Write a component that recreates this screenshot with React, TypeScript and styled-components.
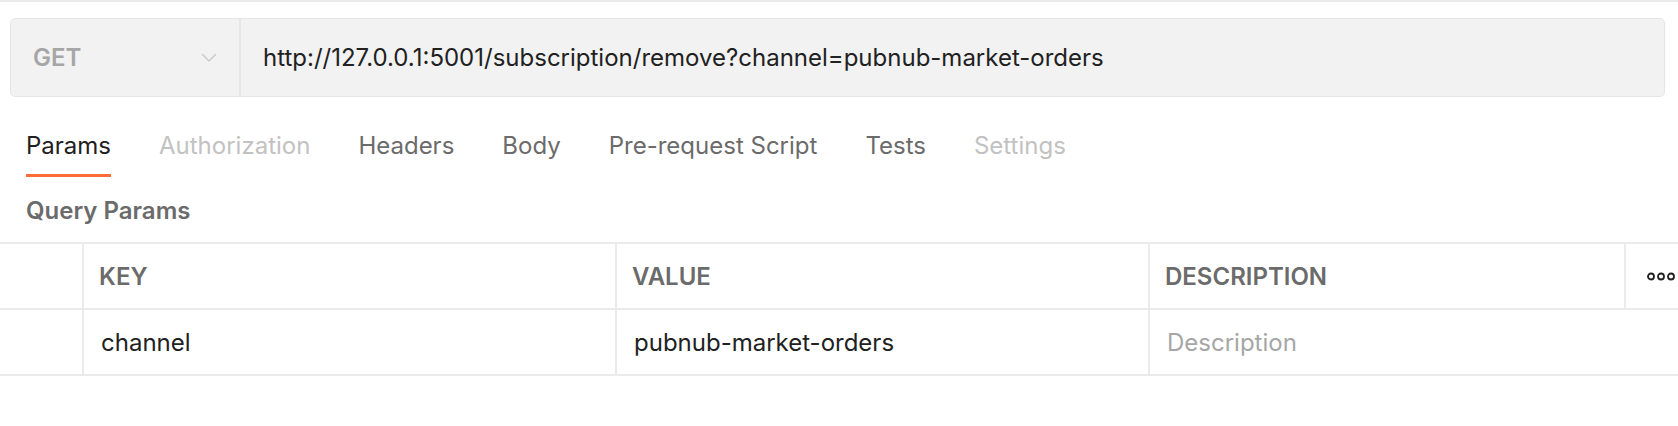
import React from "react";
import styled, { createGlobalStyle } from "styled-components";

const Global = createGlobalStyle`
  html, body { margin: 0; padding: 0; background: #ffffff; }
  body { font-family: Inter, "Noto Sans", "Liberation Sans", sans-serif; -webkit-font-smoothing: antialiased; }
`;

const Page = styled.div`
  width: 1678px;
  height: 426px;
  overflow: hidden;
  background: #ffffff;
`;

const TopRule = styled.div`
  height: 2px;
  background: #ebebeb;
`;

const UrlBar = styled.div`
  display: flex;
  align-items: stretch;
  margin: 16px 13px 0 10px;
  height: 79px;
  box-sizing: border-box;
  background: #f2f2f2;
  border: 1px solid #e6e6e6;
  border-radius: 5px;
`;

const Method = styled.div`
  width: 230px;
  flex: none;
  display: flex;
  align-items: center;
  justify-content: space-between;
  padding: 0 22px 0 22px;
  box-sizing: border-box;
  border-right: 2px solid #e6e6e6;
`;

const MethodLabel = styled.span`
  font-size: 24px;
  font-weight: 600;
  color: #a6a6a6;
`;

const UrlText = styled.div`
  flex: 1;
  display: flex;
  align-items: center;
  padding-left: 22px;
  font-size: 24px;
  color: #212121;
`;

const Tabs = styled.div`
  display: flex;
  gap: 48px;
  padding-left: 26px;
  margin-top: 34px;
`;

const Tab = styled.div<{ $state: "active" | "normal" | "muted" }>`
  font-size: 24px;
  line-height: 30px;
  padding-bottom: 13px;
  border-bottom: 3px solid ${(p) => (p.$state === "active" ? "#ff6c37" : "transparent")};
  color: ${(p) =>
    p.$state === "active" ? "#212121" : p.$state === "muted" ? "#c2c2c2" : "#6b6b6b"};
`;

const SectionTitle = styled.div`
  margin-top: 19px;
  padding-left: 26px;
  font-size: 24px;
  line-height: 30px;
  font-weight: 600;
  color: #6b6b6b;
`;

const Table = styled.div`
  margin-top: 16px;
  border-top: 2px solid #ebebeb;
`;

const Row = styled.div`
  display: grid;
  grid-template-columns: 82px 533px 533px 476px 1fr;
  height: 66px;
  box-sizing: border-box;
  border-bottom: 2px solid #ebebeb;
`;

const Cell = styled.div<{ $head?: boolean; $first?: boolean; $span?: number; $placeholder?: boolean }>`
  display: flex;
  align-items: center;
  box-sizing: border-box;
  border-left: ${(p) => (p.$first ? "none" : "2px solid #ebebeb")};
  padding-left: ${(p) => (p.$head ? "15px" : "17px")};
  font-size: 24px;
  font-weight: ${(p) => (p.$head ? 600 : 400)};
  color: ${(p) => (p.$head ? "#6b6b6b" : p.$placeholder ? "#a6a6a6" : "#212121")};
  ${(p) => (p.$span ? `grid-column: span ${p.$span};` : "")}
`;

const MenuCell = styled(Cell)`
  padding-left: 21px;
`;

const Chevron = () => (
  <svg width="16" height="10" viewBox="0 0 16 10" fill="none">
    <path d="M1.5 1.5 L8 8 L14.5 1.5" stroke="#cccccc" strokeWidth="1.6" strokeLinecap="round" strokeLinejoin="round" />
  </svg>
);

const Dots = () => (
  <svg width="28" height="9" viewBox="0 0 28 9" fill="none">
    <circle cx="4" cy="4.5" r="3" stroke="#212121" strokeWidth="1.8" />
    <circle cx="14" cy="4.5" r="3" stroke="#212121" strokeWidth="1.8" />
    <circle cx="24" cy="4.5" r="3" stroke="#212121" strokeWidth="1.8" />
  </svg>
);

const tabs: { label: string; state: "active" | "normal" | "muted" }[] = [
  { label: "Params", state: "active" },
  { label: "Authorization", state: "muted" },
  { label: "Headers", state: "normal" },
  { label: "Body", state: "normal" },
  { label: "Pre-request Script", state: "normal" },
  { label: "Tests", state: "normal" },
  { label: "Settings", state: "muted" },
];

export default function App() {
  return (
    <Page>
      <Global />
      <TopRule />
      <UrlBar>
        <Method>
          <MethodLabel>GET</MethodLabel>
          <Chevron />
        </Method>
        <UrlText>http://127.0.0.1:5001/subscription/remove?channel=pubnub-market-orders</UrlText>
      </UrlBar>
      <Tabs>
        {tabs.map((t) => (
          <Tab key={t.label} $state={t.state}>
            {t.label}
          </Tab>
        ))}
      </Tabs>
      <SectionTitle>Query Params</SectionTitle>
      <Table>
        <Row>
          <Cell $first />
          <Cell $head>KEY</Cell>
          <Cell $head>VALUE</Cell>
          <Cell $head>DESCRIPTION</Cell>
          <MenuCell>
            <Dots />
          </MenuCell>
        </Row>
        <Row>
          <Cell $first />
          <Cell>channel</Cell>
          <Cell>pubnub-market-orders</Cell>
          <Cell $span={2} $placeholder>
            Description
          </Cell>
        </Row>
      </Table>
    </Page>
  );
}
